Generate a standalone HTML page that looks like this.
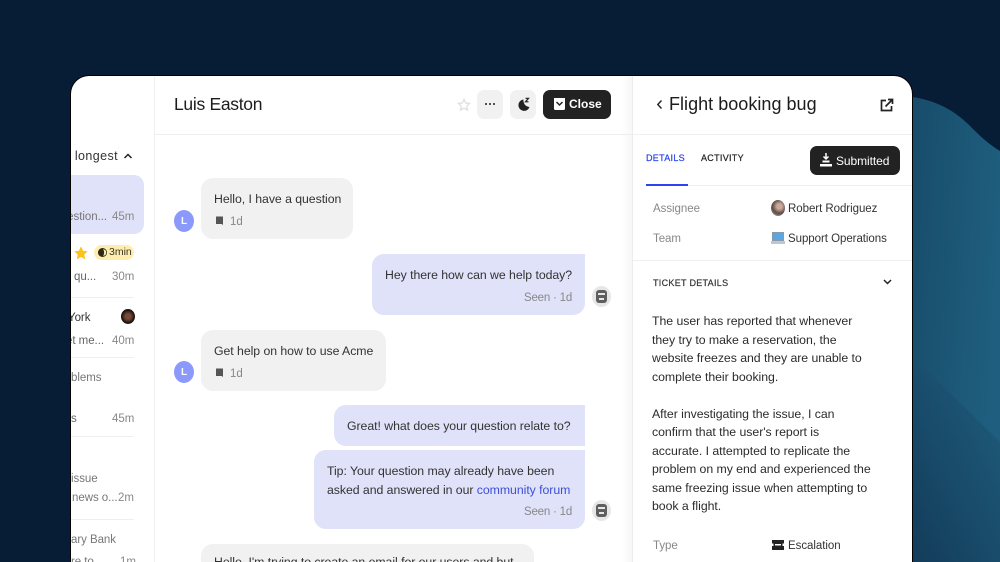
<!DOCTYPE html>
<html><head><meta charset="utf-8">
<style>
html,body{margin:0;padding:0;width:1000px;height:562px;overflow:hidden;background:#071d36;}
body{position:relative;font-family:"Liberation Sans",sans-serif;color:#222;}
.a{position:absolute;white-space:nowrap;}
.t{position:absolute;white-space:nowrap;font-size:11.5px;line-height:16px;color:#333;letter-spacing:-.05px;margin-top:1px;}
.g{color:#888;}
.b{position:absolute;border-radius:12px;}
.gb{background:#f1f1f1;}
.bb{background:#dfe2f9;}
.av{position:absolute;width:20px;height:22px;border-radius:50%;background:#8b99fb;color:#fff;font-size:10px;font-weight:bold;text-align:center;line-height:23px;}
.l{position:absolute;background:#efefef;}
.m{position:absolute;white-space:nowrap;font-size:12.3px;line-height:18.5px;color:#333;letter-spacing:-.05px;}
.cap{position:absolute;white-space:nowrap;font-size:9px;line-height:12px;letter-spacing:.3px;-webkit-text-stroke:.2px currentColor;}
</style></head><body>
<svg class="a" style="left:0;top:0" width="1000" height="562">
<defs>
<linearGradient id="g1" x1="0" y1="0" x2="1" y2="0.3"><stop offset="0" stop-color="#174a68"/><stop offset="1" stop-color="#1f5e7e"/></linearGradient>
<linearGradient id="g2" x1="0.9" y1="0" x2="0" y2="1"><stop offset="0" stop-color="#205d7d"/><stop offset="1" stop-color="#123a58"/></linearGradient>
</defs>
<path d="M900 96C935 97 958 113 972 128C982 138 990 145 1000 151V562H900Z" fill="url(#g1)"/>
<path d="M900 344L1000 442V562H900Z" fill="url(#g2)"/>
</svg>
<div class="a" style="left:70px;top:75px;width:843px;height:487px;background:#000;border-radius:19px 19px 0 0;"></div>
<div class="a" style="left:71px;top:76px;width:841px;height:486px;background:#fff;border-radius:18px 18px 0 0;overflow:hidden;"></div>

<div class="a" style="left:154px;top:76px;width:1px;height:486px;background:#f0f0f0"></div>
<div class="a" style="left:622px;top:76px;width:11px;height:486px;background:linear-gradient(90deg,#fff,#f6f6f6)"></div>
<div class="a" style="left:155px;top:134px;width:478px;height:1px;background:#eee"></div>
<div class="a" style="left:632px;top:76px;width:1px;height:486px;background:#ececec"></div>

<!-- Left list -->
<div class="a" style="left:71px;top:149px;width:47px;height:16px;overflow:hidden;font-size:12.5px;line-height:15px;color:#333;letter-spacing:.4px;"><span style="position:absolute;right:0;">g longest</span></div>
<svg class="a" style="left:123px;top:152px" width="10" height="8"><path d="M1.500 6L5 2.500L8.500 6" fill="none" stroke="#222" stroke-width="1.500"/></svg>
<div class="a" style="left:71px;top:175px;width:73px;height:59px;background:#dfe2f9;border-radius:0 10px 10px 0;"></div>
<div class="t" style="right:893px;top:208px;color:#777;">question...</div>
<div class="t g" style="left:112px;top:208px;">45m</div>
<svg class="a" style="left:74px;top:246px" width="14" height="14"><path d="M7 1L8.900 5L13 5.500L10 8.400L10.800 12.800L7 10.600L3.200 12.800L4 8.400L1 5.500L5.100 5Z" fill="#fdc31d" stroke="#fdc31d" stroke-width=".6" stroke-linejoin="round"/></svg>
<div class="a" style="left:94px;top:245px;width:40px;height:15px;border-radius:8px;background:#fdeeb0;"></div>
<svg class="a" style="left:98px;top:248px" width="9" height="9"><circle cx="4.500" cy="4.500" r="4.500" fill="#2f2818"/><path d="M5 1.200A3.300 3.300 0 0 1 5 7.800C6.500 6.200 6.500 3 5 1.200Z" fill="#fdeeb0"/></svg>
<div class="t" style="left:109px;top:244px;font-size:10.500px;line-height:15px;color:#3b3420;letter-spacing:0">3min</div>
<div class="t" style="left:74px;top:268px;color:#666;">qu...</div>
<div class="t g" style="left:112px;top:268px;">30m</div>
<div class="l" style="left:71px;top:297px;width:63px;height:1px"></div>
<div class="t" style="left:68px;top:309px;color:#333;">York</div>
<div class="a" style="left:121px;top:309px;width:14px;height:15px;border-radius:50%;background:radial-gradient(circle at 50% 50%,#7a4a38 25%,#16100e 65%);"></div>
<div class="t" style="right:896px;top:332px;color:#666;">get me...</div>
<div class="t g" style="left:112px;top:332px;">40m</div>
<div class="l" style="left:71px;top:357px;width:63px;height:1px"></div>
<div class="t" style="left:71px;top:369px;color:#777;">blems</div>
<div class="t" style="left:71px;top:410px;color:#666;">s</div>
<div class="t g" style="left:112px;top:410px;">45m</div>
<div class="l" style="left:71px;top:436px;width:63px;height:1px"></div>
<div class="t" style="left:71px;top:470px;color:#777;">issue</div>
<div class="t" style="left:72px;top:489px;color:#777;">news o...</div>
<div class="t g" style="left:118px;top:489px;">2m</div>
<div class="l" style="left:71px;top:519px;width:63px;height:1px"></div>
<div class="t" style="left:71px;top:531px;color:#777;">ary Bank</div>
<div class="t" style="left:71px;top:553px;color:#777;">re to</div>
<div class="t g" style="left:120px;top:553px;">1m</div>
<div class="a" style="left:0;top:94px;width:70px;height:468px;background:#071d36"></div>
<div class="a" style="left:70px;top:94px;width:1px;height:468px;background:#000"></div>

<!-- Header -->
<div class="a" style="left:174px;top:93px;font-size:17.500px;line-height:22px;color:#1c1c1c;letter-spacing:-.3px;">Luis Easton</div>
<svg class="a" style="left:457px;top:98px" width="14" height="14"><path d="M7 1.300L8.700 5L12.700 5.400L9.700 8.100L10.600 12.200L7 10.100L3.400 12.200L4.300 8.100L1.300 5.400L5.300 5Z" fill="none" stroke="#ddd" stroke-width="1.200"/></svg>
<div class="a" style="left:477px;top:90px;width:26px;height:29px;border-radius:7px;background:#f1f1f1;"></div>
<div class="a" style="left:485px;top:103px;width:2.400px;height:2.400px;background:#222;border-radius:50%;box-shadow:4px 0 #222,8px 0 #222"></div>
<div class="a" style="left:510px;top:90px;width:26px;height:29px;border-radius:7px;background:#f1f1f1;"></div>
<svg class="a" style="left:517px;top:97px" width="14" height="15"><path d="M6.500 2.500A5.700 5.700 0 1 0 12.500 10A6.500 6.500 0 0 1 6.500 2.500Z" fill="#222"/><path d="M8.500 1.300H11.500L8.500 4.800H11.500" fill="none" stroke="#222" stroke-width="1.200"/></svg>
<div class="a" style="left:543px;top:90px;width:68px;height:29px;border-radius:7px;background:#222;"></div>
<svg class="a" style="left:553px;top:97px" width="13" height="14"><path d="M1 1H12V11.500Q12 13 10.500 13H2.500Q1 13 1 11.500Z" fill="#fff"/><path d="M3.500 5L6.500 8L9.500 5" fill="none" stroke="#222" stroke-width="1.500"/></svg>
<div class="a" style="left:569px;top:97px;font-size:12px;line-height:15px;color:#fff;font-weight:bold;letter-spacing:0;">Close</div>

<!-- Messages -->
<div class="b gb" style="left:201px;top:178px;width:152px;height:61px;"></div>
<div class="m" style="left:214px;top:190px;">Hello, I have a question</div>
<svg class="a" style="left:215px;top:216px" width="9" height="10"><path d="M1 .5H8V9L6.500 8H1Z" fill="#555"/></svg>
<div class="t g" style="left:230px;top:213px;">1d</div>
<div class="av" style="left:174px;top:210px;">L</div>

<div class="b bb" style="left:372px;top:254px;width:213px;height:61px;border-radius:12px 0 12px 12px;"></div>
<div class="m" style="left:385px;top:266px;">Hey there how can we help today?</div>
<div class="t g" style="left:524px;top:289px;letter-spacing:-.2px;">Seen · 1d</div>
<div class="a" style="left:592px;top:286px;width:19px;height:21px;border-radius:50%;background:#e6e6e6;"></div>
<div class="a" style="left:596px;top:290px;width:11px;height:13px;border-radius:3px;background:#5e5e5e;"></div>
<div class="a" style="left:598px;top:293px;width:7px;height:2px;background:#e6e6e6;"></div>
<div class="a" style="left:599px;top:298px;width:5px;height:1.500px;background:#e6e6e6;"></div>

<div class="b gb" style="left:201px;top:330px;width:185px;height:61px;"></div>
<div class="m" style="left:214px;top:342px;">Get help on how to use Acme</div>
<svg class="a" style="left:215px;top:368px" width="9" height="10"><path d="M1 .5H8V9L6.500 8H1Z" fill="#555"/></svg>
<div class="t g" style="left:230px;top:365px;">1d</div>
<div class="av" style="left:174px;top:361px;">L</div>

<div class="b bb" style="left:334px;top:405px;width:251px;height:41px;border-radius:12px 0 0 12px;"></div>
<div class="m" style="left:347px;top:417px;">Great! what does your question relate to?</div>
<div class="b bb" style="left:314px;top:450px;width:271px;height:79px;border-radius:12px 0 12px 12px;"></div>
<div class="m" style="left:327px;top:462px;">Tip: Your question may already have been<br>asked and answered in our <span style="color:#3d4fd8">community forum</span></div>
<div class="t g" style="left:524px;top:503px;letter-spacing:-.2px;">Seen · 1d</div>
<div class="a" style="left:592px;top:500px;width:19px;height:21px;border-radius:50%;background:#e6e6e6;"></div>
<div class="a" style="left:596px;top:504px;width:11px;height:13px;border-radius:3px;background:#5e5e5e;"></div>
<div class="a" style="left:598px;top:507px;width:7px;height:2px;background:#e6e6e6;"></div>
<div class="a" style="left:599px;top:512px;width:5px;height:1.500px;background:#e6e6e6;"></div>

<div class="b gb" style="left:201px;top:544px;width:333px;height:30px;"></div>
<div class="a" style="left:214px;top:555px;height:7px;overflow:hidden;font-size:12.300px;line-height:15px;color:#333;letter-spacing:-.05px;">Hello, I'm trying to create an email for our users and but</div>

<!-- Right panel -->
<svg class="a" style="left:655px;top:98px" width="9" height="13"><path d="M6.500 2.500L2.800 6.500L6.500 10.500" fill="none" stroke="#222" stroke-width="1.400"/></svg>
<div class="a" style="left:669px;top:93px;font-size:18px;line-height:22px;color:#1c1c1c;letter-spacing:.03px;">Flight booking bug</div>
<svg class="a" style="left:880px;top:98px" width="14" height="14"><path d="M6 2.500H1.500V12.500H11.500V8" fill="none" stroke="#222" stroke-width="1.700"/><path d="M5.500 8.500L12 2M8 1.500H12.500V6" fill="none" stroke="#222" stroke-width="1.700"/></svg>
<div class="l" style="left:633px;top:134px;width:279px;height:1px"></div>
<div class="cap" style="left:646px;top:152px;color:#2a45ee;">DETAILS</div>
<div class="cap" style="left:701px;top:152px;color:#222;">ACTIVITY</div>
<div class="a" style="left:646px;top:184px;width:42px;height:2px;background:#2a45ee"></div>
<div class="l" style="left:688px;top:185px;width:224px;height:1px"></div>
<div class="a" style="left:810px;top:146px;width:90px;height:29px;border-radius:7px;background:#222;"></div>
<svg class="a" style="left:819px;top:153px" width="14" height="14"><path d="M7 0V5M4.500 3.500L7 6L9.500 3.500" fill="none" stroke="#fff" stroke-width="1.500"/><path d="M3.500 7.500H10.500V9.500H3.500ZM1 11H13V13.500H1Z" fill="#fff"/></svg>
<div class="a" style="left:836px;top:154px;font-size:12px;line-height:15px;color:#fff;letter-spacing:-.08px;">Submitted</div>

<div class="t g" style="left:653px;top:200px;">Assignee</div>
<div class="a" style="left:771px;top:200px;width:14px;height:16px;border-radius:50%;background:radial-gradient(circle at 60% 40%,#c9a99b 20%,#5e4a44 55%,#aaa 90%);"></div>
<div class="t" style="left:788px;top:200px;">Robert Rodriguez</div>
<div class="t g" style="left:653px;top:230px;">Team</div>
<div class="a" style="left:772px;top:232px;width:12px;height:9px;background:#5aa6e0;border:1px solid #8a9aa8;box-sizing:border-box;"></div>
<div class="a" style="left:771px;top:241px;width:14px;height:3px;background:#bcc8d2;"></div>
<div class="t" style="left:788px;top:230px;">Support Operations</div>
<div class="l" style="left:633px;top:260px;width:279px;height:1px"></div>
<div class="cap" style="left:653px;top:277px;color:#333;">TICKET DETAILS</div>
<svg class="a" style="left:883px;top:278px" width="9" height="8"><path d="M1 2L4.500 5.500L8 2" fill="none" stroke="#222" stroke-width="1.500"/></svg>

<div class="a" style="left:652px;top:312px;font-size:12.300px;line-height:18.500px;color:#2b2b2b;letter-spacing:-.04px;">The user has reported that whenever<br>they try to make a reservation, the<br>website freezes and they are unable to<br>complete their booking.<br><br>After investigating the issue, I can<br>confirm that the user's report is<br>accurate. I attempted to replicate the<br>problem on my end and experienced the<br>same freezing issue when attempting to<br>book a flight.</div>

<div class="t g" style="left:653px;top:537px;">Type</div>
<svg class="a" style="left:772px;top:540px" width="12" height="10"><path d="M0 0H12V3.500H10.500V6H12V10H0V6H1.500V3.500H0Z" fill="#222"/><rect x="3" y="4" width="6" height="1.500" fill="#fff"/></svg>
<div class="t" style="left:788px;top:537px;">Escalation</div>
</body></html>
